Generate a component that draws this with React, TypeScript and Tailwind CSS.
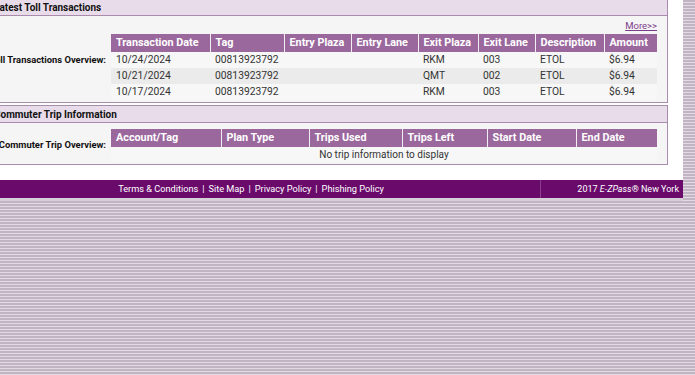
import React from 'react';

const tollHead = [
  { label: 'Transaction Date', w: 'w-[99px]' },
  { label: 'Tag', w: 'w-[74px]' },
  { label: 'Entry Plaza', w: 'w-[67px]' },
  { label: 'Entry Lane', w: 'w-[67px]' },
  { label: 'Exit Plaza', w: 'w-[60px]' },
  { label: 'Exit Lane', w: 'w-[57px]' },
  { label: 'Description', w: 'w-[69px]' },
  { label: 'Amount', w: 'w-[53px]' },
];

const tollRows = [
  ['10/24/2024', '00813923792', '', '', 'RKM', '003', 'ETOL', '$6.94'],
  ['10/21/2024', '00813923792', '', '', 'QMT', '002', 'ETOL', '$6.94'],
  ['10/17/2024', '00813923792', '', '', 'RKM', '003', 'ETOL', '$6.94'],
];

const tripHead = [
  { label: 'Account/Tag', w: 'w-[110px]' },
  { label: 'Plan Type', w: 'w-[88px]' },
  { label: 'Trips Used', w: 'w-[93px]' },
  { label: 'Trips Left', w: 'w-[85px]' },
  { label: 'Start Date', w: 'w-[89px]' },
  { label: 'End Date', w: 'w-[81px]' },
];

const footerLinks = ['Terms & Conditions', 'Site Map', 'Privacy Policy', 'Phishing Policy'];

const HeadRow = ({ cols }: { cols: { label: string; w: string }[] }) => (
  <tr className="h-[18px] bg-[#9b689e] text-white">
    {cols.map((c, i) => (
      <th
        key={c.label}
        className={`${c.w} p-0 pl-[5px] text-left text-[10.8px] font-bold ${i > 0 ? 'border-l border-[#f3eef3]' : ''}`}
      >
        {c.label}
      </th>
    ))}
  </tr>
);

const Label = ({ text }: { text: string }) => (
  <div className="flex w-[120px] shrink-0 justify-end self-center pr-[5px]">
    <span className="whitespace-nowrap text-[9.4px] font-bold text-[#111]">{text}</span>
  </div>
);

const Section = ({ title, className, children }: { title: string; className: string; children: React.ReactNode }) => (
  <div className={`ml-[2px] mr-[15px] border border-[#a98bad] ${className}`}>
    <div className="h-[17px] whitespace-nowrap bg-[#e9dcea] border-b border-[#a98bad] pl-[3px] text-[10px] font-bold leading-[17px] text-[#111]">
      {title}
    </div>
    {children}
  </div>
);

export default function App() {
  return (
    <div
      className="w-[695px] h-[375px] overflow-hidden bg-[repeating-linear-gradient(to_bottom,#c1b4c3_0px,#c1b4c3_2px,#e2dbe3_2px,#e2dbe3_3px)]"
      style={{ fontFamily: 'Roboto, "Liberation Sans", sans-serif' }}
    >
      <div className="ml-[-12px] w-[695px]">
        <div className="bg-white pb-[15px]">
          <Section title="Latest Toll Transactions" className="mt-[-2px]">
            <div className="flex bg-[#f6f5f6] pt-[4px] pb-[2px] pr-[10px]">
              <Label text="Toll Transactions Overview:" />
              <div className="w-[546px]">
                <div className="h-[13px] text-right text-[9.5px] leading-[12px]">
                  <a className="text-[#7b3d8b] underline">More&gt;&gt;</a>
                </div>
                <table className="mt-[1px] w-[546px] table-fixed border-collapse">
                  <thead>
                    <HeadRow cols={tollHead} />
                  </thead>
                  <tbody>
                    {tollRows.map((r, i) => (
                      <tr key={i} className={`h-[16px] ${i % 2 === 1 ? 'bg-[#ebebeb]' : 'bg-[#f7f7f7]'}`}>
                        {r.map((v, j) => (
                          <td key={j} className="p-0 pl-[5px] text-[10.3px] text-[#333]">
                            {v}
                          </td>
                        ))}
                      </tr>
                    ))}
                  </tbody>
                </table>
              </div>
            </div>
          </Section>

          <Section title="Commuter Trip Information" className="mt-[2px]">
            <div className="flex bg-[#f6f5f6] pt-[6px] pb-[2px] pr-[10px]">
              <Label text="Commuter Trip Overview:" />
              <table className="w-[546px] table-fixed border-collapse">
                <thead>
                  <HeadRow cols={tripHead} />
                </thead>
                <tbody>
                  <tr className="h-[14px] bg-[#f7f7f7]">
                    <td colSpan={6} className="p-0 text-center text-[10px] text-[#333]">
                      No trip information to display
                    </td>
                  </tr>
                </tbody>
              </table>
            </div>
          </Section>
        </div>

        <div className="flex h-[18px] bg-[#6a0b6c] text-[9.2px] leading-[18px] text-white">
          <div className="flex w-[552px] shrink-0 justify-center pr-[26px]">
            {footerLinks.map((l, i) => (
              <span key={l} className="whitespace-nowrap">
                {i > 0 && <span className="mx-[4px]">|</span>}
                {l}
              </span>
            ))}
          </div>
          <div className="flex-1 border-l border-[#8a3f8c] pr-[4px] text-right text-[9px]">
            2017 <i>E-ZPass</i>® New York
          </div>
        </div>
        <div className="h-[3px] bg-[#d6cfd7]" />
      </div>
    </div>
  );
}
